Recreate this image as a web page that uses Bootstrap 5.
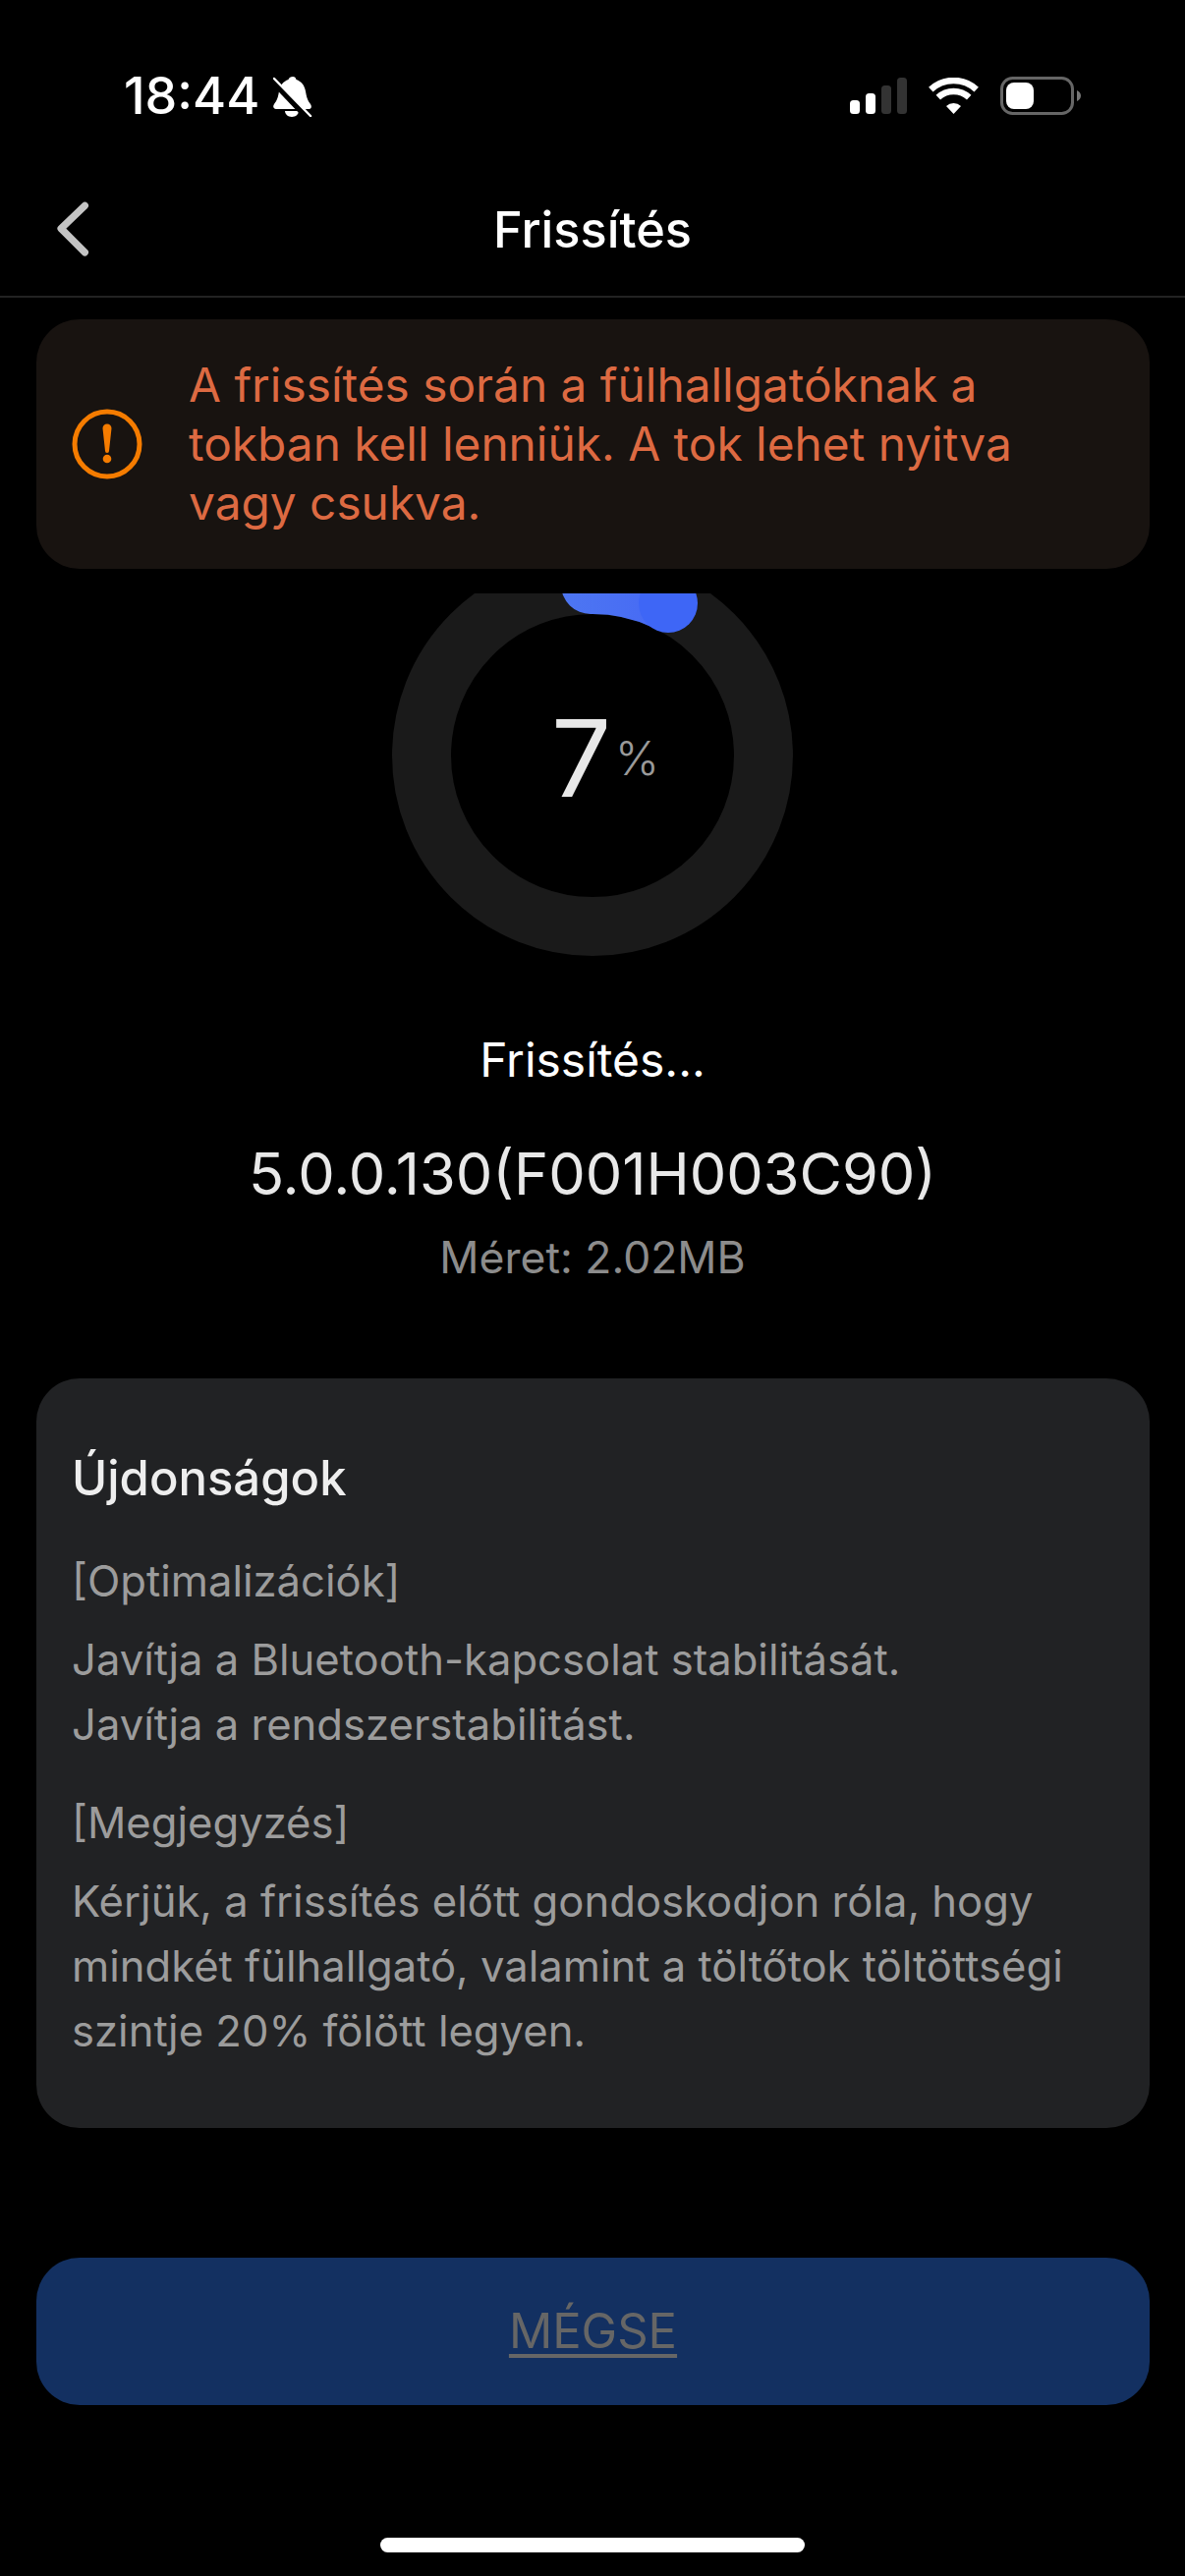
<!DOCTYPE html>
<html lang="en">
<head>
    <meta charset="UTF-8">
    <meta name="viewport" content="width=device-width, initial-scale=1.0">
    <title>Frissítés</title>
    <link href="https://cdn.jsdelivr.net/npm/bootstrap@5.3.2/dist/css/bootstrap.min.css" rel="stylesheet">
    <style>
        body {
            background: #000;
            font-family: Inter, "Noto Sans", sans-serif;
            color: #fff;
            width: 1206px;
            height: 2622px;
            overflow: hidden;
        }
        .status-bar { height: 195px; padding: 0 106px 0 126px; }
        .status-left { gap: 14px; }
        .status-right { gap: 22px; }
        .status-time { font-size: 52px; font-weight: 500; line-height: 60px; }
        .top-bar {
            height: 108px;
            padding-bottom: 28px;
            border-bottom: 2px solid #222;
            display: grid;
            grid-template-columns: 1fr auto 1fr;
            align-items: center;
        }
        .top-title { font-size: 50.5px; font-weight: 500; line-height: 60px; }
        .back-btn { margin-left: 54px; }
        .warn-box {
            background: #181310;
            border-radius: 44px;
            margin: 22px 36px 0 37px;
            height: 254px;
            padding: 0 0 0 36px;
            gap: 47px;
        }
        .warn-text { color: #dd6a42; font-size: 47.8px; line-height: 60px; width: 880px; }
        .ring-wrap { height: 371px; margin-top: 25px; overflow: hidden; position: relative; }
        .ring-text { position: absolute; inset: 0; padding: 0 0 36px 26px; }
        .ring-num { font-size: 108px; color: #e8e8e8; line-height: 1; }
        .ring-pct { font-size: 48px; color: #9a9a9a; font-weight: 300; line-height: 1; margin-left: 4px; }
        .state-text { font-size: 48px; line-height: 60px; margin-top: 74px; }
        .version-text { font-size: 59.5px; line-height: 70px; margin-top: 50px; color: #e8e8e8; }
        .size-text { font-size: 44.5px; line-height: 56px; margin-top: 23px; color: #8c8c8c; }
        .news-card {
            background: #212224;
            border-radius: 44px;
            margin: 95px 36px 0 37px;
            height: 763px;
            padding: 70px 36px 0 36px;
        }
        .news-title { font-size: 49px; font-weight: 500; line-height: 64px; color: #eee; }
        .news-text { font-size: 43.6px; line-height: 66px; color: #9c9c9c; }
        .news-head { margin-bottom: 14px; }
        .news-first { margin-top: 40px; }
        .news-second { margin-top: 34px; }
        .cancel-btn {
            background: #133061;
            border: 0;
            border-radius: 44px;
            margin: 132px 36px 0 37px;
            height: 150px;
            width: 1133px;
            color: #666;
            font-size: 49px;
            text-decoration: underline;
            text-decoration-thickness: 4px;
            text-underline-offset: 6px;
        }
        .home-bar { width: 432px; height: 15px; background: #fff; border-radius: 8px; margin: 135px auto 0; }
    </style>
</head>
<body>

    <div class="status-bar d-flex justify-content-between align-items-center">
        <div class="status-left d-flex align-items-center">
            <span class="status-time">18:44</span>
            <svg width="40" height="42" viewBox="0 0 40 42">
                <path d="M20 1c2 0 3 1 3.500 3C29 6 32 10 33 16c1 6 2 9 5 13 1.500 2 1 5-1.500 5H3c-3 0-3.500-3-2-5 3-4 4-7 5-13C7 10 10 6 15.500 4 16 2 18 1 20 1z" fill="#fff"/>
                <path d="M12 36h14c0 3-3 6-7 6s-7-3-7-6z" fill="#fff"/>
                <path d="M-1 5l37 39" stroke="#000" stroke-width="6"/>
                <path d="M1 3l37 38" stroke="#fff" stroke-width="2.500" stroke-linecap="round"/>
            </svg>
        </div>
        <div class="status-right d-flex align-items-center">
            <svg width="58" height="37" viewBox="0 0 58 37">
                <rect x="0" y="23" width="10" height="14" rx="3.500" fill="#fff"/>
                <rect x="16" y="16" width="10" height="21" rx="3.500" fill="#fff"/>
                <rect x="32" y="8" width="10" height="29" rx="3.500" fill="#333"/>
                <rect x="48" y="0" width="10" height="37" rx="3.500" fill="#333"/>
            </svg>
            <svg width="51" height="37" viewBox="0 0 51 37">
                <path d="M25.500 37L18 29A11 11 0 0 1 33 29Z" fill="#fff"/>
                <path d="M9.800 20.200A23 23 0 0 1 41.200 20.200" fill="none" stroke="#fff" stroke-width="6.500"/>
                <path d="M2.300 12.100A34 34 0 0 1 48.700 12.100" fill="none" stroke="#fff" stroke-width="6.500"/>
            </svg>
            <svg width="82" height="39" viewBox="0 0 82 39">
                <rect x="1.500" y="1.500" width="72" height="36" rx="11" fill="none" stroke="#666" stroke-width="3"/>
                <rect x="6" y="6" width="28" height="27" rx="8" fill="#fff"/>
                <path d="M78 14c2.500 1 4 3 4 5.500s-1.500 4.500-4 5.500z" fill="#777"/>
            </svg>
        </div>
    </div>

    <div class="top-bar">
        <svg class="back-btn" width="40" height="64" viewBox="0 0 40 70" aria-label="back">
            <path d="M33.500 8L7 33.500l26.500 26.500" fill="none" stroke="#c4c4c4" stroke-width="8" stroke-linecap="round" stroke-linejoin="round"/>
        </svg>
        <span class="top-title">Frissítés</span>
        <span></span>
    </div>

    <div class="warn-box d-flex align-items-center">
        <svg width="72" height="72" viewBox="0 0 72 72" class="flex-shrink-0">
            <circle cx="36" cy="36" r="33" fill="none" stroke="#f57c00" stroke-width="5"/>
            <path d="M31.500 20a4.500 4.500 0 0 1 9 0l-2.500 23a2 2 0 0 1-4 0z" fill="#f57c00"/>
            <circle cx="36" cy="51" r="4.300" fill="#f57c00"/>
        </svg>
        <div class="warn-text">A frissítés során a fülhallgatóknak a tokban kell lenniük. A tok lehet nyitva vagy csukva.</div>
    </div>

    <div class="ring-wrap">
        <svg width="1206" height="371" viewBox="0 604 1206 371">
            <defs>
                <linearGradient id="arcFill" x1="573" y1="0" x2="680" y2="0" gradientUnits="userSpaceOnUse">
                    <stop offset="0" stop-color="#4d76f2"/>
                    <stop offset="1" stop-color="#4669f4"/>
                </linearGradient>
            </defs>
            <circle cx="603" cy="769" r="174" fill="none" stroke="#1a1a1a" stroke-width="60"/>
            <path d="M601 595A174 174 0 0 1 677 611.500" fill="none" stroke="url(#arcFill)" stroke-width="60" stroke-linecap="round"/>
            <circle cx="680" cy="614" r="30" fill="#3e66f6"/>
        </svg>
        <div class="ring-text d-flex justify-content-center align-items-center">
            <span class="ring-num">7</span><span class="ring-pct">%</span>
        </div>
    </div>

    <div class="state-text text-center">Frissítés...</div>
    <div class="version-text text-center">5.0.0.130(F001H003C90)</div>
    <div class="size-text text-center">Méret: 2.02MB</div>

    <div class="news-card">
        <div class="news-title">Újdonságok</div>
        <div class="news-text news-head news-first">[Optimalizációk]</div>
        <div class="news-text">Javítja a Bluetooth-kapcsolat stabilitását.</div>
        <div class="news-text">Javítja a rendszerstabilitást.</div>
        <div class="news-text news-head news-second">[Megjegyzés]</div>
        <div class="news-text">Kérjük, a frissítés előtt gondoskodjon róla, hogy mindkét fülhallgató, valamint a töltőtok töltöttségi szintje 20% fölött legyen.</div>
    </div>

    <button type="button" class="btn cancel-btn d-block">MÉGSE</button>
    <div class="home-bar"></div>

</body>
</html>
